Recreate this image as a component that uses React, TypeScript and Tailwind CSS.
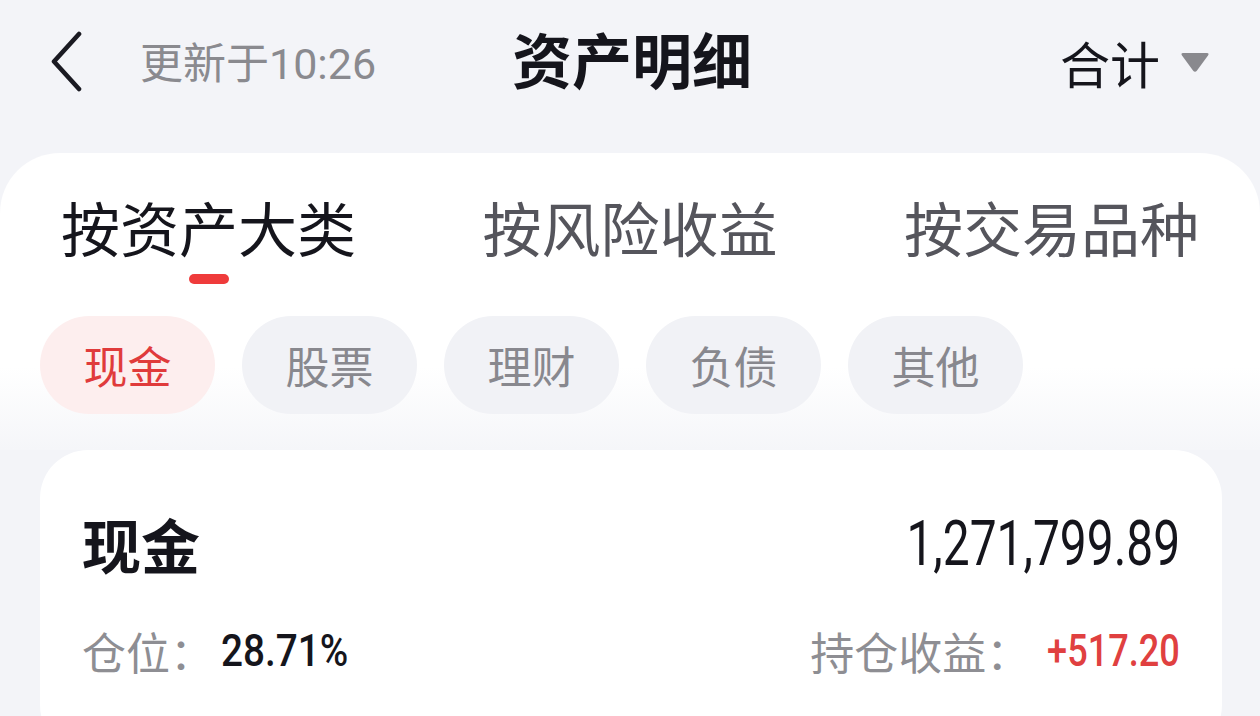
import React, { useState } from 'react';

const cjk = "font-['Noto_Sans_CJK_SC','Noto_Sans',sans-serif]";
const num = "font-['Roboto','Noto_Sans_CJK_SC',sans-serif]";

const tabs = ['按资产大类', '按风险收益', '按交易品种'];
const chips = ['现金', '股票', '理财', '负债', '其他'];

export default function App() {
  const [activeTab, setActiveTab] = useState(0);
  const [activeChip, setActiveChip] = useState(0);

  return (
    <div className={`w-[1260px] h-[716px] overflow-hidden bg-[#f3f4f8] ${cjk}`}>
      {/* Header */}
      <header className="relative h-[124px] flex items-center justify-between pl-[50px] pr-[50px]">
        <div className="flex items-center">
          <svg width="34" height="62" viewBox="0 0 34 62" className="mr-[56px]">
            <path d="M29 3 L4 30.5 L29 58" fill="none" stroke="#1a1a22" strokeWidth="4.6" strokeLinecap="round" strokeLinejoin="round" />
          </svg>
          <span className="text-[43px] leading-[50px] text-[#8a8a8f]">
            更新于<span className={num}>10:26</span>
          </span>
        </div>
        <h1 className="absolute left-[512px] top-[26px] text-[60px] leading-[64px] font-bold text-[#15151c]">资产明细</h1>
        <div className="flex items-center">
          <span className="text-[50px] leading-[56px] text-[#15151c] mr-[20px]">合计</span>
          <svg width="30" height="22" viewBox="0 0 30 22">
            <path d="M3 2 H27 Q29.5 2 28 4.5 L17 19.5 Q15 22 13 19.5 L2 4.5 Q0.5 2 3 2 Z" fill="#89898e" />
          </svg>
        </div>
      </header>

      {/* Tabs panel */}
      <section className="mt-[29px] rounded-t-[60px] bg-linear-to-b from-white from-72% to-[#f5f6f9] pb-[36px]">
        <div className="flex justify-between px-[61px] pt-[44px]">
          {tabs.map((t, i) => (
            <button
              key={t}
              onClick={() => setActiveTab(i)}
              className="flex flex-col items-center"
            >
              <span className={`text-[59px] leading-[60px] ${i === activeTab ? 'text-[#15151c]' : 'text-[#55555c]'}`}>{t}</span>
              <span className={`mt-[17px] h-[10px] w-[40px] rounded-full ${i === activeTab ? 'bg-[#ef3b3b]' : 'bg-transparent'}`} />
            </button>
          ))}
        </div>

        <div className="flex gap-[27px] px-[40px] mt-[32px]">
          {chips.map((c, i) => (
            <button
              key={c}
              onClick={() => setActiveChip(i)}
              className={`w-[175px] h-[98px] rounded-full flex items-center justify-center text-[44px] leading-none ${
                i === activeChip ? 'bg-[#fdeeee] text-[#e03b3b]' : 'bg-[#f1f2f6] text-[#88888e]'
              }`}
            >
              {c}
            </button>
          ))}
        </div>
      </section>

      {/* Card */}
      <div className="ml-[40px] w-[1182px] bg-white rounded-[48px] px-[42px] pt-[64px] pb-[80px]">
        <div className="flex items-center justify-between h-[60px]">
          <span className="text-[59px] leading-[60px] font-bold text-[#15151c]">现金</span>
          <span className={`${num} inline-block text-[63px] leading-[60px] text-[#15151c] scale-x-[0.76] origin-right`}>1,271,799.89</span>
        </div>
        <div className="flex items-center justify-between mt-[55px] h-[44px]">
          <div className="flex items-center">
            <span className="text-[44px] leading-[44px] text-[#8e8e93]">仓位：</span>
            <span className={`${num} inline-block font-medium text-[44px] leading-[44px] text-[#15151c] ml-[7px] scale-x-[0.88] origin-left`}>28.71%</span>
          </div>
          <div className="flex items-center">
            <span className="text-[44px] leading-[44px] text-[#8e8e93]">持仓收益：</span>
            <span className={`${num} inline-block font-medium text-[44px] leading-[44px] text-[#e04040] ml-[-12px] scale-x-[0.82] origin-right`}>+517.20</span>
          </div>
        </div>
      </div>
    </div>
  );
}
